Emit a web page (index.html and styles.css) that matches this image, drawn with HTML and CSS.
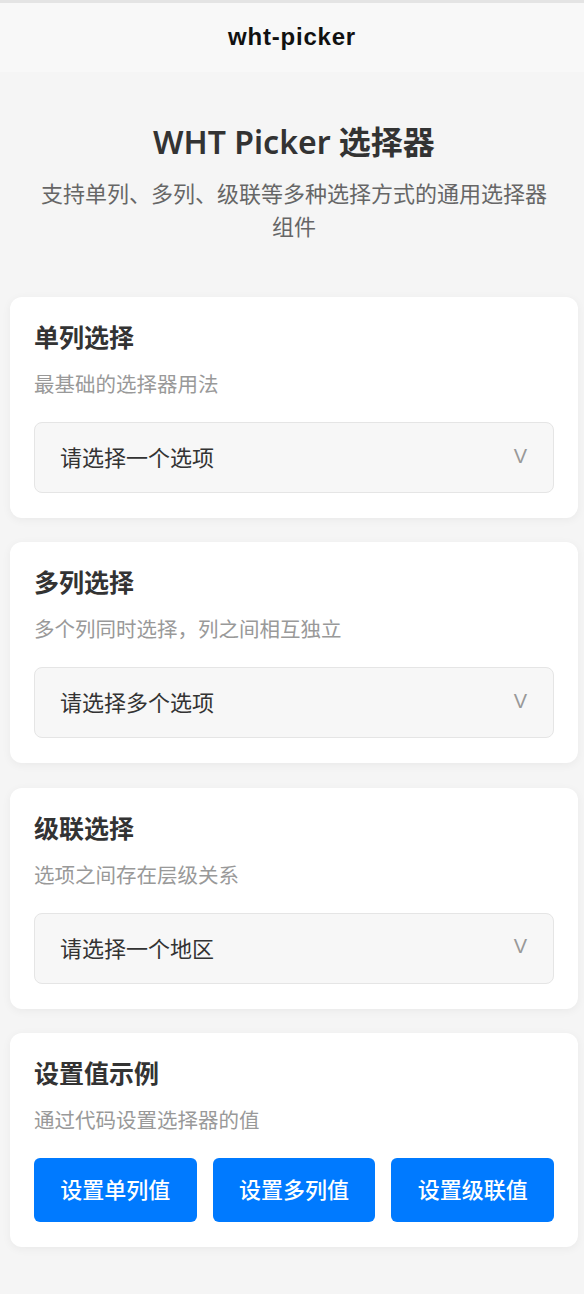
FILE: index.html
```html
<!DOCTYPE html>
<html lang="zh">
<head>
<meta charset="utf-8">
<title>wht-picker</title>
<link rel="stylesheet" href="styles.css">
</head>
<body>
<div class="topline"></div>
<header class="navbar">wht-picker</header>
<main class="page">
  <section class="hero">
    <h1 class="hero-title">WHT Picker 选择器</h1>
    <p class="hero-sub">支持单列、多列、级联等多种选择方式的通用选择器组件</p>
  </section>

  <section class="card">
    <h2 class="card-title">单列选择</h2>
    <p class="card-desc">最基础的选择器用法</p>
    <div class="picker"><span>请选择一个选项</span><span class="chev">V</span></div>
  </section>

  <section class="card">
    <h2 class="card-title">多列选择</h2>
    <p class="card-desc">多个列同时选择，列之间相互独立</p>
    <div class="picker"><span>请选择多个选项</span><span class="chev">V</span></div>
  </section>

  <section class="card">
    <h2 class="card-title">级联选择</h2>
    <p class="card-desc">选项之间存在层级关系</p>
    <div class="picker"><span>请选择一个地区</span><span class="chev">V</span></div>
  </section>

  <section class="card">
    <h2 class="card-title">设置值示例</h2>
    <p class="card-desc">通过代码设置选择器的值</p>
    <div class="btns">
      <button class="btn">设置单列值</button>
      <button class="btn">设置多列值</button>
      <button class="btn">设置级联值</button>
    </div>
  </section>
</main>
</body>
</html>
```
FILE: styles.css
```css
* { box-sizing: border-box; }
html, body { margin: 0; padding: 0; }
body {
  background: #f5f5f5;
  font-family: "Noto Sans CJK SC", "Noto Sans", sans-serif;
  color: #333;
  width: 584px;
  min-height: 1294px;
}
.topline { height: 3px; background: #e4e4e4; }
.navbar {
  height: 69px;
  background: #f8f8f8;
  display: flex;
  align-items: center;
  justify-content: center;
  font-family: "Liberation Sans", "Noto Sans CJK SC", sans-serif;
  font-weight: 700;
  font-size: 24px;
  letter-spacing: 0.8px;
  color: #111;
  padding-bottom: 1px;
}
.page { padding: 0 6px 40px 10px; }
.hero { text-align: center; padding: 48px 26px 55px; }
.hero-title {
  margin: 0;
  font-size: 32px;
  line-height: 44px;
  font-weight: 600;
  color: #333;
  font-family: "Noto Sans", "Noto Sans CJK SC", sans-serif;
}
.hero-sub {
  margin: 12px 0 0;
  font-size: 22px;
  line-height: 33px;
  color: #666;
}
.card {
  background: #fff;
  border-radius: 12px;
  box-shadow: 0 2px 10px rgba(0,0,0,0.05);
  padding: 22px 24px 25px;
  margin-bottom: 24.3px;
}
.card-title {
  margin: 0;
  font-size: 25px;
  line-height: 34px;
  font-weight: 600;
  color: #333;
}
.card-desc {
  margin: 16px 0 25px;
  font-size: 20.5px;
  line-height: 28px;
  color: #999;
}
.picker {
  height: 71px;
  background: #f7f7f7;
  border: 1px solid #e5e5e5;
  border-radius: 8px;
  display: flex;
  align-items: center;
  justify-content: space-between;
  padding: 0 26px 3px 25px;
  font-size: 22px;
  color: #333;
}
.chev {
  font-family: "Liberation Sans", sans-serif;
  font-size: 20px;
  color: #999;
}
.btns { display: flex; gap: 16px; }
.btn {
  flex: 1;
  height: 64px;
  border: none;
  border-radius: 6px;
  background: #007aff;
  color: #fff;
  font-family: "Noto Sans CJK SC", sans-serif;
  font-size: 22px;
  font-weight: 500;
  padding: 0 0 3px;
}
```
